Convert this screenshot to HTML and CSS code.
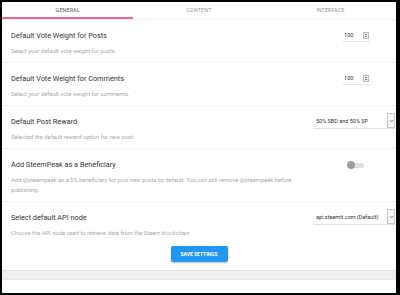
FILE: index.html
```html
<!DOCTYPE html>
<html>
<head>
<meta charset="utf-8">
<link rel="stylesheet" href="styles.css">
</head>
<body>
<div class="frame">
  <div class="tabs">
    <div class="tab active">GENERAL</div>
    <div class="tab">CONTENT</div>
    <div class="tab">INTERFACE</div>
  </div>
  <div class="panel">
    <div class="row">
      <div class="info">
        <div class="title">Default Vote Weight for Posts</div>
        <div class="desc">Select your default vote weight for posts.</div>
      </div>
      <div class="num"><span class="val">100</span><span class="spin"><svg width="6" height="7" viewBox="0 0 6 7"><rect x="0.5" y="0.5" width="5" height="6" fill="#f2f2f2" stroke="#bbb"/><path d="M1.8 3 L3 1.8 L4.2 3Z M1.8 4 L3 5.2 L4.2 4Z" fill="#555"/></svg></span></div>
    </div>
    <div class="row">
      <div class="info">
        <div class="title">Default Vote Weight for Comments</div>
        <div class="desc">Select your default vote weight for comments.</div>
      </div>
      <div class="num"><span class="val">100</span><span class="spin"><svg width="6" height="7" viewBox="0 0 6 7"><rect x="0.5" y="0.5" width="5" height="6" fill="#f2f2f2" stroke="#bbb"/><path d="M1.8 3 L3 1.8 L4.2 3Z M1.8 4 L3 5.2 L4.2 4Z" fill="#555"/></svg></span></div>
    </div>
    <div class="row">
      <div class="info">
        <div class="title">Default Post Reward</div>
        <div class="desc">Selected the default reward option for new post.</div>
      </div>
      <div class="select"><span class="opt">50% SBD and 50% SP</span><span class="arrow"><svg width="5" height="4" viewBox="0 0 5 4"><path d="M0.8 1 L2.5 2.8 L4.2 1" fill="none" stroke="#666" stroke-width="0.8"/></svg></span></div>
    </div>
    <div class="row">
      <div class="info">
        <div class="title">Add SteemPeak as a Beneficiary</div>
        <div class="desc wide">Add @steempeak as a 5% beneficiary for your new posts by default. You can still remove @steempeak before publishing.</div>
      </div>
      <div class="toggle"><span class="track"></span><span class="knob"></span></div>
    </div>
    <div class="row last">
      <div class="info">
        <div class="title">Select default API node</div>
        <div class="desc">Choose the API node used to retrieve data from the Steem blockchain</div>
      </div>
      <div class="select"><span class="opt">api.steemit.com (Default)</span><span class="arrow"><svg width="5" height="4" viewBox="0 0 5 4"><path d="M0.8 1 L2.5 2.8 L4.2 1" fill="none" stroke="#666" stroke-width="0.8"/></svg></span></div>
    </div>
    <div class="actions"><button class="save">SAVE SETTINGS</button></div>
  </div>
  <div class="band"></div>
  <div class="next">Disable Notifications</div>
</div>
</body>
</html>
```
FILE: styles.css
```css
html, body {
  margin: 0;
  padding: 0;
  background: #000;
}
body {
  width: 400px;
  height: 295px;
  overflow: hidden;
  font-family: Roboto, "Liberation Sans", sans-serif;
}
.frame {
  margin: 2px 4px 0 2px;
  height: 291px;
  background: #fff;
  overflow: hidden;
}
.tabs {
  display: flex;
  border-bottom: 1px solid #eee;
}
.tab {
  flex: 1;
  height: 15px;
  border-bottom: 2px solid transparent;
  display: flex;
  align-items: center;
  justify-content: center;
  font-size: 5.4px;
  color: #999;
  letter-spacing: 0.1px;
}
.tab.active {
  color: #555;
  border-bottom-color: #f06292;
}
.row {
  display: flex;
  align-items: flex-start;
  justify-content: space-between;
  padding: 10px 0 6px 9px;
  border-bottom: 1px solid #eee;
}
.row.last {
  border-bottom: none;
}
.info {
  flex: 1;
  max-width: 300px;
}
.desc.wide {
  max-width: 300px;
}
.title {
  font-size: 7.3px;
  line-height: 12px;
  color: #333;
}
.desc {
  margin-top: 4px;
  font-size: 5.8px;
  line-height: 10px;
  color: #aaa;
}
.num {
  display: flex;
  align-items: center;
  margin-right: 26px;
  margin-top: 0;
  width: 27px;
  height: 10px;
  border-bottom: 1px solid #e3e3e3;
  padding-bottom: 1px;
}
.val {
  font-size: 5.6px;
  color: #333;
  margin-left: 1px;
  width: 19px;
}
.spin {
  display: flex;
}
.select {
  display: flex;
  align-items: stretch;
  width: 82px;
  height: 15px;
  margin-top: -3px;
  margin-bottom: -3px;
  margin-right: 1px;
  border-bottom: 1px solid #e0e0e0;
}
.opt {
  flex: 1;
  font-size: 5.5px;
  color: #333;
  display: flex;
  align-items: center;
  padding-left: 3px;
}
.arrow {
  width: 6px;
  border: 1px solid #ccc;
  background: #f4f4f4;
  display: flex;
  align-items: center;
  justify-content: center;
}
.toggle {
  position: relative;
  width: 17px;
  height: 8px;
  margin-right: 32px;
  margin-top: 2px;
}
.track {
  position: absolute;
  left: 2px;
  top: 1.5px;
  width: 15px;
  height: 5px;
  border-radius: 3px;
  background: #e0e0e0;
}
.knob {
  position: absolute;
  left: 0;
  top: 0;
  width: 8px;
  height: 8px;
  border-radius: 50%;
  background: #9e9e9e;
}
.actions {
  display: flex;
  justify-content: center;
  padding-top: 2px;
}
.save {
  width: 57px;
  height: 16px;
  border: none;
  border-radius: 2px;
  background: #2196f3;
  color: #fff;
  font-family: Roboto, "Liberation Sans", sans-serif;
  font-weight: bold;
  font-size: 5px;
  padding: 0;
  box-shadow: 0 1px 2px rgba(0,0,0,0.25);
}
.band {
  margin-top: 8px;
  height: 8px;
  background: #efefef;
  border-top: 1px solid #e2e2e2;
  border-bottom: 1px solid #e8e8e8;
}
.next {
  padding: 11px 0 0 9px;
  font-size: 7.3px;
  line-height: 12px;
  color: #333;
}
```
